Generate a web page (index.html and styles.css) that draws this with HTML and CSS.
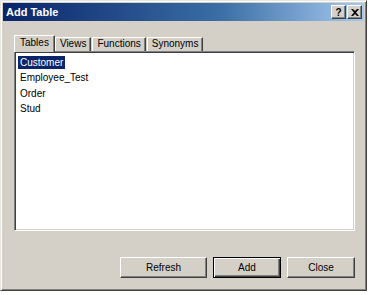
FILE: index.html
```html
<!DOCTYPE html>
<html lang="en">
<head>
    <meta charset="UTF-8">
    <title>Add Table</title>
    <link rel="stylesheet" href="styles.css">
</head>
<body>

    <div class="dialog">
        <div class="titlebar">
            <span class="title">Add Table</span>
            <div class="caption-buttons">
                <button class="cap-btn">?</button>
                <button class="cap-btn">
                    <svg width="8" height="7" viewBox="0 0 8 7"><path d="M0 0h2l2 2 2-2h2L5 3.5 8 7H6L4 5 2 7H0l3-3.5z" fill="#000"/></svg>
                </button>
            </div>
        </div>

        <div class="content">
            <div class="tabs">
                <div class="tab active">Tables</div>
                <div class="tab">Views</div>
                <div class="tab">Functions</div>
                <div class="tab">Synonyms</div>
            </div>
            <div class="tab-panel">
                <ul class="list">
                    <li><span class="selected">Customer</span></li>
                    <li><span>Employee_Test</span></li>
                    <li><span>Order</span></li>
                    <li><span>Stud</span></li>
                </ul>
            </div>

            <div class="actions">
                <button class="btn">Refresh</button>
                <button class="btn default">Add</button>
                <button class="btn">Close</button>
            </div>
        </div>
    </div>

</body>
</html>
```

FILE: styles.css
```css
* {
    margin: 0;
    padding: 0;
    box-sizing: border-box;
    font-family: 'Liberation Sans', Arial, sans-serif;
}

body {
    background: #ffffff;
    width: 371px;
    height: 295px;
    overflow: hidden;
}

.dialog {
    width: 367px;
    height: 291px;
    background: #d4d0c8;
    border: 1px solid;
    border-color: #e8e6e0 #404040 #404040 #e8e6e0;
    box-shadow: inset 1px 1px 0 #ffffff, inset -1px -1px 0 #808080;
    padding: 2px;
    display: flex;
    flex-direction: column;
}

.titlebar {
    height: 18px;
    background: linear-gradient(to right, #0a246a, #3a6ea5 60%, #a6caf0);
    display: flex;
    align-items: center;
    justify-content: space-between;
    padding: 0 2px 0 3px;
}

.title {
    color: #ffffff;
    font-weight: bold;
    font-size: 11px;
}

.caption-buttons {
    display: flex;
    gap: 1px;
}

.cap-btn {
    width: 15px;
    height: 14px;
    background: #d4d0c8;
    border: 1px solid;
    border-color: #ffffff #404040 #404040 #ffffff;
    box-shadow: inset -1px -1px 0 #808080;
    font-weight: bold;
    font-size: 10px;
    line-height: 11px;
    display: flex;
    align-items: center;
    justify-content: center;
    color: #000;
}

.content {
    flex: 1;
    display: flex;
    flex-direction: column;
    padding: 14px 9px 10px 11px;
}

.tabs {
    display: flex;
    align-items: flex-end;
    height: 16px;
    padding-left: 1px;
    position: relative;
    z-index: 1;
}

.tab {
    font-size: 10px;
    color: #000;
    height: 14px;
    line-height: 12px;
    padding: 0 4px;
    border: 1px solid;
    border-bottom: none;
    border-color: #ffffff #404040 transparent #ffffff;
    box-shadow: inset -1px 0 0 #808080;
    margin-right: 1px;
}

.tab.active {
    height: 17px;
    line-height: 14px;
    padding: 0 5px;
    margin-bottom: -1px;
    background: #d4d0c8;
    margin-left: -1px;
    margin-right: 0;
}

.tab-panel {
    height: 180px;
    border: 1px solid;
    border-color: #808080 #ffffff #ffffff #808080;
    box-shadow: inset 1px 1px 0 #404040, inset -1px -1px 0 #d4d0c8;
    background: #ffffff;
    padding: 4px 3px;
}

.list {
    list-style: none;
}

.list li {
    height: 15.3px;
    font-size: 10px;
    line-height: 13px;
}

.list span {
    display: inline-block;
    padding: 0 2px;
    height: 13px;
}

.list .selected {
    background: #0a246a;
    color: #ffffff;
}

.actions {
    margin-top: auto;
    display: flex;
    justify-content: flex-end;
    gap: 6px;
}

.btn {
    width: 87px;
    height: 21px;
    background: #d4d0c8;
    border: 1px solid;
    border-color: #ffffff #404040 #404040 #ffffff;
    box-shadow: inset -1px -1px 0 #808080;
    font-size: 10px;
    color: #000;
}

.btn.default {
    width: 68px;
    border: 1px solid #000;
    box-shadow: inset 1px 1px 0 #ffffff, inset -1px -1px 0 #404040, inset -2px -2px 0 #808080;
}

.btn:last-child {
    width: 68px;
}
```
